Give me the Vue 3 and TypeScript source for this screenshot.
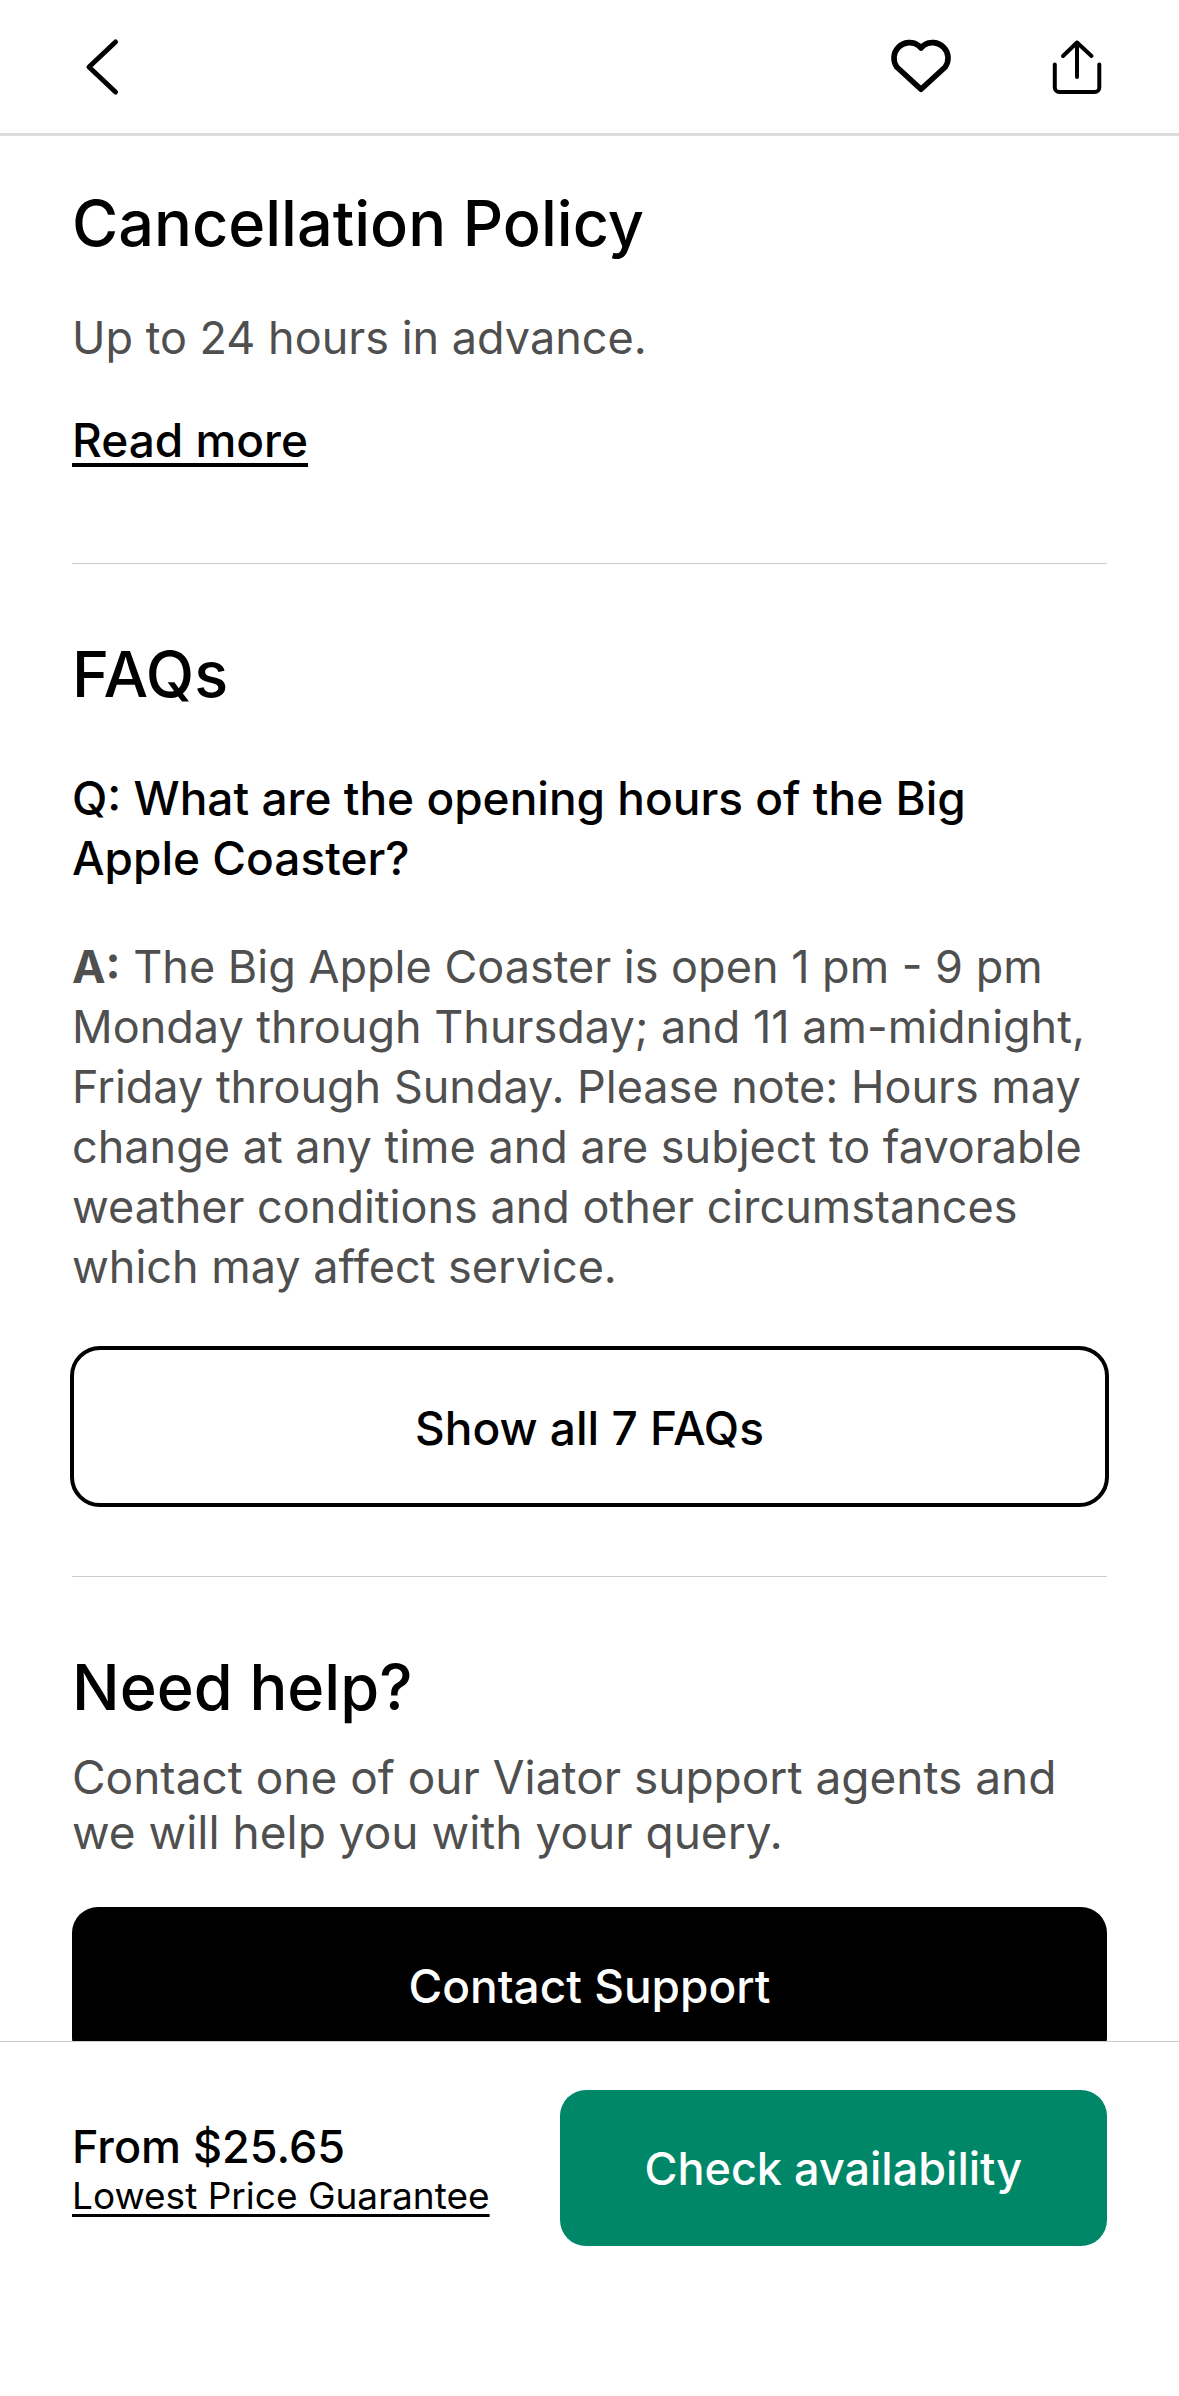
<script setup lang="ts">
import { ref } from 'vue'

interface Faq {
  question: string
  answer: string
}

const faq: Faq = {
  question: 'What are the opening hours of the Big Apple Coaster?',
  answer:
    'The Big Apple Coaster is open 1 pm - 9 pm Monday through Thursday; and 11 am-midnight, Friday through Sunday. Please note: Hours may change at any time and are subject to favorable weather conditions and other circumstances which may affect service.',
}
const faqCount = 7
const price = '$25.65'
const saved = ref(false)
</script>

<template>
  <div class="screen">
    <header class="topbar">
      <button class="icon-btn" type="button" aria-label="Back">
        <svg width="40" height="64" viewBox="0 0 40 64" fill="none" stroke="#000" stroke-width="5" stroke-linecap="round" stroke-linejoin="round">
          <path d="M31.500 7 5 32l26.500 25" />
        </svg>
      </button>
      <div class="actions">
        <button class="icon-btn" type="button" aria-label="Save" :aria-pressed="saved" @click="saved = !saved">
          <svg width="64" height="64" viewBox="0 0 64 64" :fill="saved ? '#000' : 'none'" stroke="#000" stroke-width="5.600" stroke-linecap="round" stroke-linejoin="round">
            <path d="M32 13 29.500 10.500A15.500 15.500 0 0 0 8 32.300L32 54.300 56 32.300A15.500 15.500 0 0 0 34.500 10.500Z" />
          </svg>
        </button>
        <button class="icon-btn" type="button" aria-label="Share">
          <svg width="64" height="64" viewBox="0 0 64 64" fill="none" stroke="#000" stroke-width="4" stroke-linecap="round" stroke-linejoin="round">
            <path d="M32 42V7.500M18 21 32 7.500 46.500 21" />
            <path d="M9.800 29.500v23a4.500 4.500 0 0 0 4.500 4.500h35.500a4.500 4.500 0 0 0 4.500-4.500v-23" />
          </svg>
        </button>
      </div>
    </header>

    <main class="content">
      <section class="section">
        <h2 class="title">Cancellation Policy</h2>
        <p class="body policy">Up to 24 hours in advance.</p>
        <a class="more" href="#policy">Read more</a>
      </section>

      <section class="section faqs">
        <h2 class="title">FAQs</h2>
        <h3 class="question">Q: {{ faq.question }}</h3>
        <p class="body answer"><b>A:</b> {{ faq.answer }}</p>
        <button class="btn outline" type="button">Show all {{ faqCount }} FAQs</button>
      </section>

      <section class="section help">
        <h2 class="title">Need help?</h2>
        <p class="body contact">Contact one of our Viator support agents and we will help you with your query.</p>
        <button class="btn dark" type="button">Contact Support</button>
      </section>
    </main>

    <footer class="bookbar">
      <div class="price">
        <strong class="amount">From {{ price }}</strong>
        <a class="guarantee" href="#guarantee">Lowest Price Guarantee</a>
      </div>
      <button class="btn book" type="button">Check availability</button>
    </footer>
  </div>
</template>

<style>
body {
  margin: 0;
  background: #fff;
}
</style>

<style scoped>
.screen {
  display: flex;
  flex-direction: column;
  height: 100vh;
  background: #fff;
  color: #000;
  font-family: Inter, "Liberation Sans", sans-serif;
  font-size: 46px;
  line-height: 60px;
}
.topbar {
  display: flex;
  flex: none;
  align-items: center;
  justify-content: space-between;
  padding: 35px 70px 34px 84px;
  border-bottom: 3px solid #dcdcdc;
}
.actions {
  display: flex;
  gap: 92px;
}
.icon-btn {
  display: block;
  padding: 0;
  border: 0;
  background: none;
}
.icon-btn svg {
  display: block;
}
.content {
  flex: 1;
  min-height: 0;
  overflow-y: auto;
  scrollbar-width: none;
  padding: 0 72px;
}
.section {
  display: flex;
  flex-direction: column;
  padding-top: 74px;
}
.section:first-child {
  padding-top: 51px;
}
.section + .section {
  border-top: 1px solid #ccc;
}
.title {
  margin: 0;
  font-size: 63px;
  line-height: 72px;
  font-weight: 500;
}
.body {
  margin: 0;
  color: #4f4f4f;
  font-size: 45px;
}
.policy {
  margin-top: 49px;
}
.more {
  align-self: flex-start;
  margin: 42px 0 93px;
  color: #000;
  font-weight: 500;
  text-decoration: underline;
  text-decoration-thickness: 4px;
  text-underline-offset: 6px;
  text-decoration-skip-ink: none;
}
.question {
  margin: 58px 0 49px;
  padding-right: 24px;
  font-size: 46px;
  font-weight: 500;
}
.contact {
  margin: 27px 0 47px;
  font-size: 46px;
  line-height: 55px;
}
.btn {
  flex: none;
  box-sizing: border-box;
  height: 156px;
  padding: 2px 0 0;
  border: 0;
  border-radius: 26px;
  color: #fff;
  font: inherit;
  font-weight: 500;
}
.outline {
  height: 161px;
  margin: 49px -2px 69px;
  border: 4px solid #000;
  border-radius: 30px;
  background: #fff;
  color: #000;
}
.dark {
  background: #000;
}
.bookbar {
  display: flex;
  flex: none;
  align-items: center;
  justify-content: space-between;
  gap: 70px;
  padding: 48px 72px 150px;
  border-top: 1px solid #ccc;
}
.price {
  display: flex;
  flex-direction: column;
  padding-top: 3px;
}
.amount {
  font-size: 45px;
  line-height: 52px;
  font-weight: 500;
}
.guarantee {
  color: #000;
  font-size: 37px;
  line-height: 46px;
  text-decoration: underline;
  text-decoration-thickness: 3px;
  text-underline-offset: 5px;
  text-decoration-skip-ink: none;
}
.book {
  flex: 1;
  background: #008768;
  font-size: 45px;
}
</style>
